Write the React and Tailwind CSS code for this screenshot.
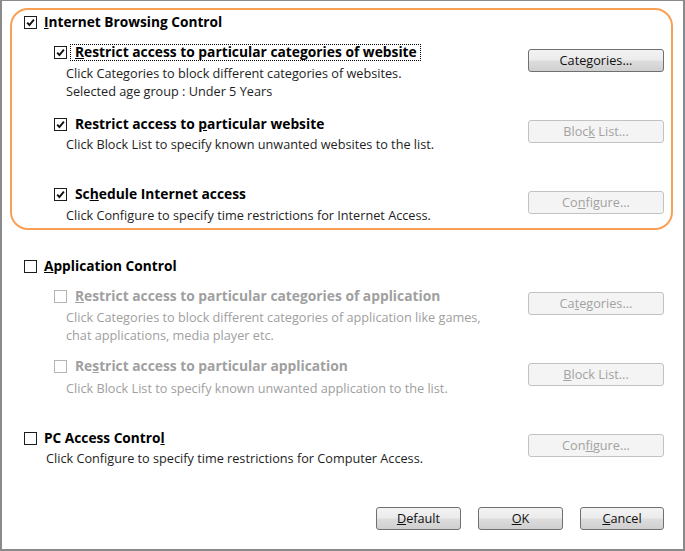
import React from "react";

const font = { fontFamily: '"Open Sans", "Noto Sans", sans-serif' };

const Check = ({ checked, disabled }) => (
    <span
        className={`relative inline-block w-[13px] h-[13px] shrink-0 border bg-white ${disabled ? "border-[#b4b4b4]" : "border-[#1c1c1c]"}`}
    >
        {checked && (
            <svg viewBox="0 0 11 11" className="absolute left-0 top-0 w-[11px] h-[11px]">
                <path d="M2.2 5.6 L4.4 8 L8.9 2.6" fill="none" stroke="#111" strokeWidth="1.9" />
            </svg>
        )}
    </span>
);

const Btn = ({ children, disabled, className = "" }) => (
    <div
        className={`h-[23px] flex items-center justify-center rounded-[3px] border text-[12.7px] ${disabled
            ? "border-[#c2c2c2] bg-[#f4f4f4] text-[#a2a2a2]"
            : "border-[#707070] bg-[linear-gradient(#f3f3f3_0%,#ebebeb_48%,#dddddd_52%,#cfcfcf_100%)] text-[#111]"
            } ${className}`}
    >
        <span>{children}</span>
    </div>
);

// one option: checkbox + bold title, description lines under it, button on the right
const Option = ({ title, lines, checked, disabled, button, btnDisabled, btnTop, descTop = "mt-[3px]", focus }) => (
    <div className="flex justify-between">
        <div className="flex flex-col">
            <div className="flex items-center h-[18px]">
                <Check checked={checked} disabled={disabled} />
                {focus ? (
                    <span className="ml-[3px] pl-[4px] pr-[3px] h-[17px] flex items-center border border-dotted border-black text-[13.8px] font-bold text-black">
                        {title}
                    </span>
                ) : (
                    <span className={`ml-[8px] text-[13.8px] font-bold ${disabled ? "text-[#a0a0a0]" : "text-black"}`}>
                        {title}
                    </span>
                )}
            </div>
            <div className={`${descTop} ml-[12px] text-[12.7px] leading-[18px] ${disabled ? "text-[#a0a0a0]" : "text-[#1e1e1e]"}`}>
                {lines.map((l, i) => (
                    <div key={i}>{l}</div>
                ))}
            </div>
        </div>
        <Btn disabled={btnDisabled} className={`w-[136px] ${btnTop}`}>
            {button}
        </Btn>
    </div>
);

export default function App() {
    return (
        <div
            className="w-[685px] h-[551px] bg-white border-t border-x-2 border-b-2 border-[#8a8a8a] flex flex-col"
            style={font}
        >
            {/* Internet Browsing Control group */}
            <div className="mt-[7px] ml-[8px] w-[663px] h-[222px] border-2 border-[#f9a057] rounded-[18px] flex flex-col pl-[12px] pr-[7px]">
                <div className="mt-[3px] flex items-center h-[18px]">
                    <Check checked />
                    <span className="ml-[7px] text-[13.7px] font-bold text-black">
                        <u>I</u>nternet Browsing Control
                    </span>
                </div>
                <div className="mt-[12px] ml-[30px]">
                    <Option
                        checked
                        focus
                        title={<><u>R</u>estrict access to particular categories of website</>}
                        lines={["Click Categories to block different categories of websites.", "Selected age group : Under 5 Years"]}
                        button={<>Cate<u>g</u>ories...</>}
                        btnTop="mt-[6px]"
                    />
                </div>
                <div className="mt-[15px] ml-[30px]">
                    <Option
                        checked
                        title={<>Restrict access to <u>p</u>articular website</>}
                        lines={["Click Block List to specify known unwanted websites to the list."]}
                        button={<>Bloc<u>k</u> List...</>}
                        btnDisabled
                        btnTop="mt-[5px]"
                        descTop="mt-[2px]"
                    />
                </div>
                <div className="mt-[32px] ml-[30px]">
                    <Option
                        checked
                        title={<>Sc<u>h</u>edule Internet access</>}
                        lines={["Click Configure to specify time restrictions for Internet Access."]}
                        button={<>Co<u>n</u>figure...</>}
                        btnDisabled
                        btnTop="mt-[6px]"
                    />
                </div>
            </div>

            {/* Application Control */}
            <div className="mt-[27px] ml-[22px] flex items-center h-[18px]">
                <Check />
                <span className="ml-[7px] text-[13.7px] font-bold text-black">
                    <u>A</u>pplication Control
                </span>
            </div>
            <div className="mt-[12px] ml-[52px] mr-[19px]">
                <Option
                    disabled
                    title={<><u>R</u>estrict access to particular categories of application</>}
                    lines={["Click Categories to block different categories of application like games,", "chat applications, media player etc."]}
                    button={<>Ca<u>t</u>egories...</>}
                    btnDisabled
                    btnTop="mt-[5px]"
                    descTop="mt-[3px] leading-[17px]"
                />
            </div>
            <div className="mt-[13px] ml-[52px] mr-[19px]">
                <Option
                    disabled
                    title={<>Re<u>s</u>trict access to particular application</>}
                    lines={["Click Block List to specify known unwanted application to the list."]}
                    button={<><u>B</u>lock List...</>}
                    btnDisabled
                    btnTop="mt-[6px]"
                    descTop="mt-[4px]"
                />
            </div>

            {/* PC Access Control */}
            <div className="mt-[32px] ml-[22px] mr-[19px] flex justify-between">
                <div className="flex flex-col">
                    <div className="flex items-center h-[18px]">
                        <Check />
                        <span className="ml-[7px] text-[13.7px] font-bold text-black">
                            PC Access Contro<u>l</u>
                        </span>
                    </div>
                    <div className="mt-[2px] ml-[22px] text-[12.7px] leading-[18px] text-[#1e1e1e]">
                        Click Configure to specify time restrictions for Computer Access.
                    </div>
                </div>
                <Btn disabled className="w-[136px] mt-[5px]">
                    Con<u>f</u>igure...
                </Btn>
            </div>

            {/* dialog buttons */}
            <div className="mt-auto mb-[19px] mr-[19px] flex justify-end gap-[17px]">
                <Btn className="w-[85px]">
                    <u>D</u>efault
                </Btn>
                <Btn className="w-[85px]">
                    <u>O</u>K
                </Btn>
                <Btn className="w-[84px]">
                    <u>C</u>ancel
                </Btn>
            </div>
        </div>
    );
}
